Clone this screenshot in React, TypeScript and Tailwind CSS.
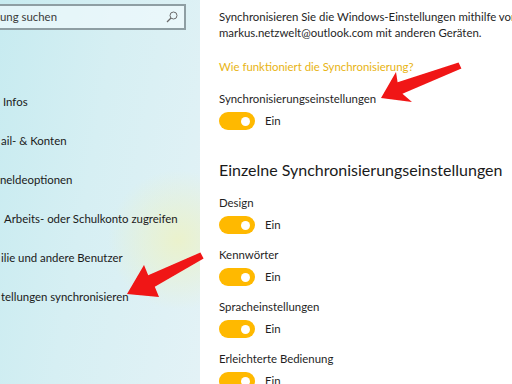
import React from "react";

function Toggle() {
  return (
    <div className="mt-[5px] flex h-[18px] items-center">
      <div className="flex h-[18px] w-[36px] items-center justify-end rounded-full bg-[#ffb900] pr-[5px]">
        <div className="h-[9px] w-[9px] rounded-full bg-white" />
      </div>
      <span className="ml-[10px] text-[11.4px] leading-[16px] text-[#1f1f1f]">Ein</span>
    </div>
  );
}

function Group({ label }: { label: string }) {
  return (
    <div className="mt-[13px]">
      <div className="text-[11.4px] leading-[16px] text-[#1f1f1f]">{label}</div>
      <Toggle />
    </div>
  );
}

const navItems: { text: string; pad: string }[] = [
  { text: "Infos", pad: "pl-[3px]" },
  { text: "ail- & Konten", pad: "pl-[1px]" },
  { text: "neldeoptionen", pad: "pl-[0px]" },
  { text: "Arbeits- oder Schulkonto zugreifen", pad: "pl-[4px]" },
  { text: "ilie und andere Benutzer", pad: "pl-[1px]" },
  { text: "tellungen synchronisieren", pad: "pl-[1px]" },
];

export default function App() {
  return (
    <div
      className="relative flex h-[384px] w-[512px] overflow-hidden bg-white"
      style={{ fontFamily: 'Lato, "Noto Sans", sans-serif' }}
    >
      {/* Sidebar */}
      <div className="flex h-full w-[200px] shrink-0 flex-col bg-[radial-gradient(circle_at_178px_240px,rgba(236,242,200,0.9)_0px,rgba(236,242,200,0.45)_35px,rgba(236,242,200,0)_70px),linear-gradient(100deg,#c7ebf0_0%,#d6eff3_45%,#e3f2f6_100%)]">
        <div className="mt-[4px] flex h-[26px] w-[186px] items-center border-2 border-l-0 border-[#8e9ea3] bg-[rgba(240,250,252,0.7)]">
          <span className="flex-1 text-[11.4px] leading-[16px] text-[#3a3a3a]">ung suchen</span>
          <svg width="12" height="12" viewBox="0 0 12 12" className="mr-[6px]" fill="none">
            <circle cx="7.5" cy="4.5" r="3.5" stroke="#6b6b6b" strokeWidth="1" />
            <line x1="5" y1="7" x2="1" y2="11" stroke="#6b6b6b" strokeWidth="1.2" />
          </svg>
        </div>
        <div className="mt-[52px] flex flex-col">
          {navItems.map((n) => (
            <div
              key={n.text}
              className={`flex h-[39px] items-center whitespace-nowrap text-[11.4px] leading-[16px] text-[#1a1a1a] ${n.pad}`}
            >
              {n.text}
            </div>
          ))}
        </div>
      </div>

      {/* Content */}
      <div className="flex flex-1 flex-col whitespace-nowrap pl-[19px] pt-[9px] text-[#1f1f1f]">
        <div className="text-[11.4px] leading-[16px]">Synchronisieren Sie die Windows-Einstellungen mithilfe von</div>
        <div className="text-[11.4px] leading-[16px]">markus.netzwelt@outlook.com mit anderen Geräten.</div>
        <div className="mt-[18px] text-[11.4px] leading-[16px] text-[#e8b414]">Wie funktioniert die Synchronisierung?</div>
        <div className="mt-[16px] text-[11.4px] leading-[16px]">Synchronisierungseinstellungen</div>
        <Toggle />
        <div className="mt-[28px] text-[16px] leading-[24px] text-[#1a1a1a]">Einzelne Synchronisierungseinstellungen</div>
        <Group label="Design" />
        <Group label="Kennwörter" />
        <Group label="Spracheinstellungen" />
        <Group label="Erleichterte Bedienung" />
      </div>

      {/* Arrows overlay */}
      <svg
        className="pointer-events-none absolute inset-0"
        width="512"
        height="384"
        viewBox="0 0 512 384"
      >
        <defs>
          <filter id="sh" x="-20%" y="-20%" width="140%" height="140%">
            <feGaussianBlur stdDeviation="0.5" />
          </filter>
        </defs>
        <g fill="#f01414" filter="url(#sh)">
          <polygon points="381,98 396,72 397.6,82.2 458.6,62.6 461.4,68.4 402.4,93.8 412,102" />
          <polygon points="127,294 144,265 148.2,275.2 200.4,252.6 203.6,258.4 154.8,286.8 159,297" />
        </g>
      </svg>
    </div>
  );
}
